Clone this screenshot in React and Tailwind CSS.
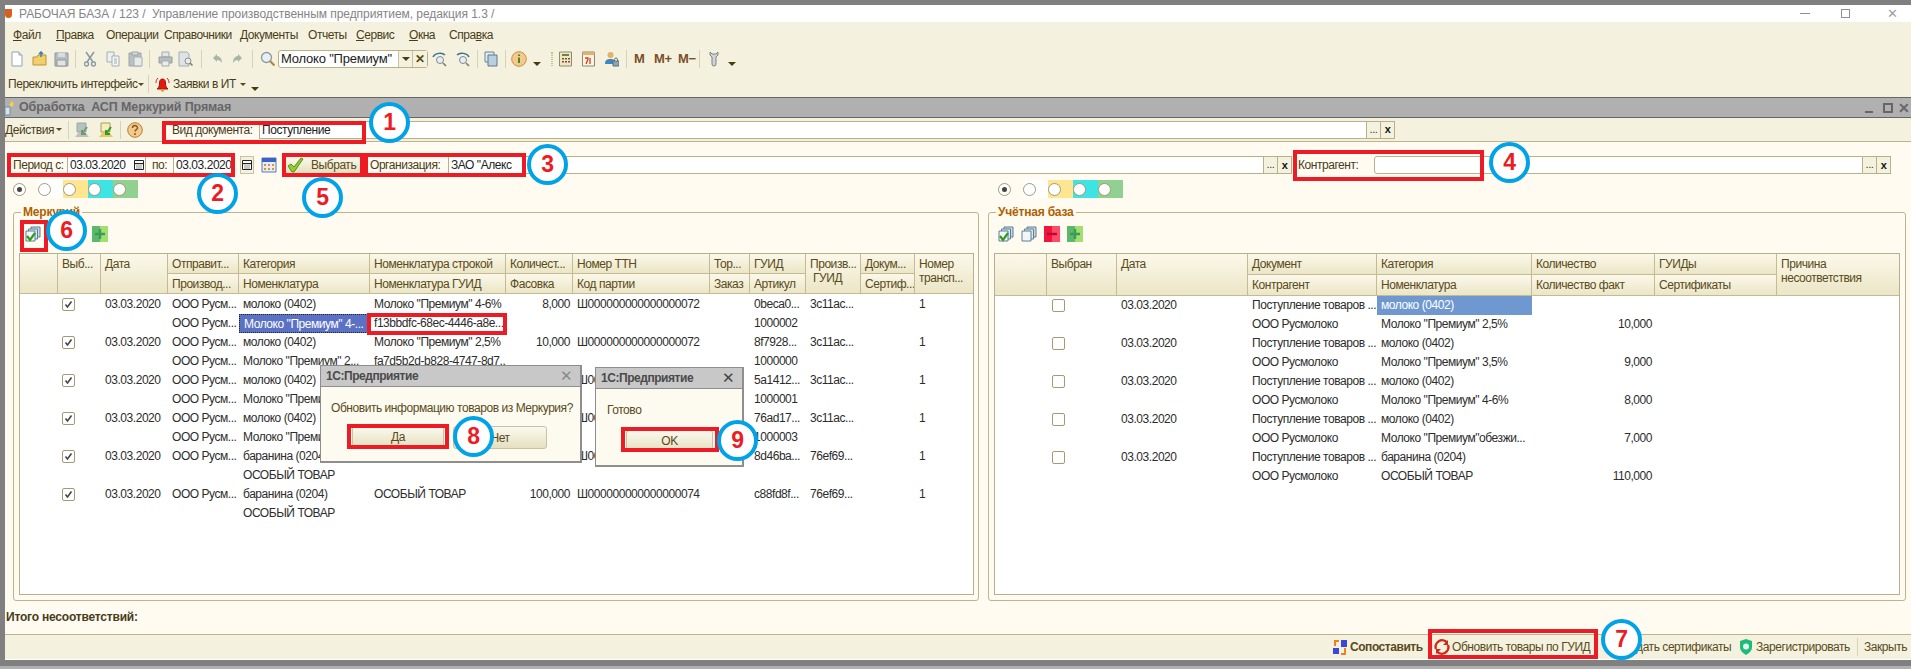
import React from 'react'

const Sep = ({ className = '' }) => <div className={`h-[18px] w-px shrink-0 bg-[#d8d3b4] ${className}`} />
const Drop = ({ className = '' }) => (
  <div className={`h-0 w-0 shrink-0 border-x-[4px] border-t-[4px] border-x-transparent border-t-[#4a3a10] ${className}`} />
)
const Small = ({ className = '' }) => (
  <div className={`h-0 w-0 shrink-0 border-x-[3px] border-t-[3px] border-x-transparent border-t-[#5a4a20] ${className}`} />
)

const Ico = ({ w = 16, className = '', children }) => (
  <svg width={w} height="16" viewBox={`0 0 ${w} 16`} className={`shrink-0 ${className}`}>
    {children}
  </svg>
)

const DocI = (p) => (
  <Ico w={12} {...p}>
    <path d="M1 1h7l3 3v11H1z" fill="#fff" stroke="#8fa3b8" />
    <path d="M8 1v3h3" fill="#dfe8f0" stroke="#8fa3b8" />
  </Ico>
)
const FolderI = (p) => (
  <Ico w={15} {...p}>
    <path d="M1 6h4l1-2h8v10H1z" fill="#f2cf6b" stroke="#b8963a" />
    <path d="M9 6V1M7 3l2-2 2 2" fill="none" stroke="#3d7fb0" strokeWidth="1.5" />
  </Ico>
)
const SaveI = (p) => (
  <Ico w={15} {...p}>
    <path d="M1 2h13v13H1z" fill="#b5bcc0" stroke="#8f979b" />
    <path d="M4 2h7v4H4z" fill="#d7dcdd" />
    <path d="M3 9h9v6H3z" fill="#e2e4e2" stroke="#8f979b" />
  </Ico>
)
const CutI = (p) => (
  <Ico w={12} {...p}>
    <path d="M2 1l7 10M10 1L3 11" stroke="#8a9aa8" strokeWidth="1.6" fill="none" />
    <circle cx="2.5" cy="13" r="2" fill="none" stroke="#8a9aa8" strokeWidth="1.4" />
    <circle cx="9.5" cy="13" r="2" fill="none" stroke="#8a9aa8" strokeWidth="1.4" />
  </Ico>
)
const CopyI = (p) => (
  <Ico w={14} {...p}>
    <path d="M1 1h7v10H1z" fill="#eef0ee" stroke="#a3aeb5" />
    <path d="M6 5h7v10H6z" fill="#f4f5f2" stroke="#a3aeb5" />
    <path d="M8 8h3M8 10h3M8 12h3" stroke="#a3aeb5" />
  </Ico>
)
const PasteI = (p) => (
  <Ico w={15} {...p}>
    <path d="M1 2h12v13H1z" fill="#b9c1c5" stroke="#9aa4aa" />
    <path d="M4 1h6v3H4z" fill="#dadcd8" stroke="#9aa4aa" />
    <path d="M6 6h8v9H6z" fill="#e8eae6" stroke="#a3aeb5" />
  </Ico>
)
const PrintI = (p) => (
  <Ico w={15} {...p}>
    <path d="M4 1h7v5H4z" fill="#e4e6e3" stroke="#a3aaad" />
    <path d="M1 6h13v6H1z" fill="#b7bdc0" stroke="#969ea2" />
    <path d="M4 10h7v5H4z" fill="#eceee9" stroke="#a3aaad" />
  </Ico>
)
const PreviewI = (p) => (
  <Ico w={15} {...p}>
    <path d="M1 1h8l2 2v12H1z" fill="#dfe3e4" stroke="#a3aeb5" />
    <circle cx="10" cy="10" r="3" fill="#e8eef0" stroke="#8a8f90" />
    <path d="M12 12l2.5 2.5" stroke="#8a7a50" strokeWidth="1.5" />
  </Ico>
)
const BackI = ({ flip, ...p }) => (
  <Ico w={11} {...p}>
    <path
      d={flip ? 'M6 3l4 4-4 4V9C4 9 2 10 1 12 1 8 3 5 6 5z' : 'M5 3L1 7l4 4V9c2 0 4 1 5 3 0-4-2-7-5-7z'}
      fill="#a8b6a8"
    />
  </Ico>
)
const SearchI = (p) => (
  <Ico w={15} {...p}>
    <circle cx="6.5" cy="6.5" r="5" fill="#e6eff5" stroke="#8f9aa0" strokeWidth="1.3" />
    <path d="M10 10l4.5 4.5" stroke="#b08a3c" strokeWidth="2.2" />
  </Ico>
)
const HistI = ({ flip, ...p }) => (
  <Ico w={15} {...p}>
    <path
      d={flip ? 'M14 6C12 2 5 1 2 4' : 'M1 6C3 2 10 1 13 4'}
      fill="none"
      stroke="#3d6f9a"
      strokeWidth="1.5"
    />
    <circle cx="8" cy="9" r="3.5" fill="#e6eff5" stroke="#7e8a90" />
    <path d="M11 12l3 3" stroke="#8a7a50" strokeWidth="1.6" />
  </Ico>
)
const WinI = (p) => (
  <Ico w={14} {...p}>
    <path d="M1 1h9v10H1z" fill="#dfe9f0" stroke="#6f8696" />
    <path d="M4 4h9v11H4z" fill="#b9d0e0" stroke="#5f7686" />
  </Ico>
)
const InfoI = (p) => (
  <Ico w={16} {...p}>
    <circle cx="8" cy="8" r="7.3" fill="#f4c98c" stroke="#c98d4a" />
    <path d="M8 6.5v5.5M8 3.5v1.5" stroke="#4d8a20" strokeWidth="2" />
  </Ico>
)
const CalcI = (p) => (
  <Ico w={13} {...p}>
    <path d="M.5 1h12v14H.5z" fill="#f4e4c2" stroke="#8e8a70" />
    <path d="M3 3h7v2H3z" fill="#5b8a4a" />
    <path d="M3 7h2v1.5H3zM6 7h2v1.5H6zM9 7h2v1.5H9zM3 10h2v1.5H3zM6 10h2v1.5H6zM9 10h2v1.5H9z" fill="#6a5a3a" />
  </Ico>
)
const DateI = (p) => (
  <Ico w={13} {...p}>
    <path d="M.5 1h12v14H.5z" fill="#fbf5e2" stroke="#8e8a70" />
    <path d="M.5 1h12v3H.5z" fill="#e0b070" />
    <path d="M3 7h3v1L4 13M8 7v6" fill="none" stroke="#d83a20" strokeWidth="1.3" />
  </Ico>
)
const UserI = (p) => (
  <Ico w={14} {...p}>
    <circle cx="5.5" cy="4" r="3" fill="#e8b060" />
    <path d="M0 13c0-4 2-5 5.5-5S10 9 10 13z" fill="#3e86c0" />
    <path d="M8 10h6v5H8z" fill="#8fa4ae" stroke="#5f7078" />
    <path d="M9.5 10V8.5a1.5 1.5 0 013 0V10" fill="none" stroke="#5f7078" />
  </Ico>
)
const WrenchI = (p) => (
  <Ico w={10} {...p}>
    <path
      d="M1 1v3l2 2v7a2 2 0 004 0V6l2-2V1L7 3H3z"
      fill="#d0d4d4"
      stroke="#7c8488"
    />
  </Ico>
)
const BellI = (p) => (
  <Ico w={15} {...p}>
    <path d="M7.5 3C5 3 4.5 5 4.5 8S3 12 2 13h11c-1-1-2.5-2-2.5-5S10 3 7.5 3z" fill="#e21a12" stroke="#a81008" />
    <circle cx="7.5" cy="14.3" r="1.5" fill="#d8a020" />
    <path d="M3 2C1.5 3.5 1 5 1 7M12 2c1.5 1.5 2 3 2 5" fill="none" stroke="#e21a12" />
  </Ico>
)
const StarI = (p) => (
  <Ico w={11} {...p}>
    <path d="M7 1l2 3-2 3-3-2z" fill="#f4d04a" />
    <path d="M0 7h5v8H0z" fill="#d5e3ec" stroke="#6f8fa4" />
  </Ico>
)
const DocArrI = ({ dim, ...p }) => (
  <Ico w={17} {...p}>
    <path d="M3 1h9v9H3z" fill={dim ? '#b5c0c0' : '#f5ecc0'} stroke={dim ? '#9aa8a8' : '#b09a50'} />
    <path d="M1 15l4-5h6l4 5z" fill={dim ? '#c0c0b4' : '#e8c860'} />
    <path d="M13 5l-5 7M8 8v4h4" fill="none" stroke={dim ? '#6f9a7a' : '#2f9a2f'} strokeWidth="2" />
  </Ico>
)
const HelpI = (p) => (
  <Ico w={16} {...p}>
    <circle cx="8" cy="8" r="7.3" fill="#f4c98c" stroke="#b08040" />
    <path d="M5.5 6a2.500 2.500 0 115 0c0 1.500-2.500 1.800-2.500 3.500M8 11v2" fill="none" stroke="#8a5a1a" strokeWidth="1.500" />
  </Ico>
)
const StackI = ({ check, ...p }) => (
  <Ico w={16} {...p}>
    <path d="M6 1h9v10H6z" fill="#c8dae6" stroke="#5f7f94" />
    <path d="M3.5 3h9v10h-9z" fill="#dce8f0" stroke="#5f7f94" />
    <path d="M1 5h9v10H1z" fill="#f2f6f8" stroke="#5f7f94" />
    {check && <path d="M2 10l3 4 5-7" fill="none" stroke="#2f9a20" strokeWidth="2.2" />}
  </Ico>
)
const PlusI = (p) => (
  <Ico w={16} {...p}>
    <path d="M0 0h8v16H0z" fill="#5cb86a" />
    <path d="M8 0h8v16H8z" fill="#a0e070" />
    <path d="M8 3v10M3 8h10" stroke="#3f9a58" strokeWidth="2.4" />
  </Ico>
)
const MinusI = (p) => (
  <Ico w={16} {...p}>
    <path d="M0 0h8v16H0z" fill="#f0143c" />
    <path d="M8 0h8v16H8z" fill="#ff4a6a" />
    <path d="M3 8h10" stroke="#b80a30" strokeWidth="2.4" />
  </Ico>
)
const CalendBlue = (p) => (
  <Ico w={16} {...p}>
    <path d="M1 1h14v14H1z" fill="#e4eef8" stroke="#5a78b0" />
    <path d="M1 1h14v4H1z" fill="#3a62c8" />
    <path d="M3 7h2v2H3zM7 7h2v2H7zM11 7h2v2h-2zM3 11h2v2H3zM7 11h2v2H7zM11 11h2v2h-2z" fill="#e09030" />
  </Ico>
)
const GridMini = () => (
  <svg width="10" height="10" viewBox="0 0 10 10" className="shrink-0">
    <path d="M.5.5h9v9h-9z" fill="#fff" stroke="#222" />
    <path d="M1 3h8v1.2H1z" fill="#222" />
    <path d="M2.5 5.500h1v1h-1zM4.500 5.500h1v1h-1zM6.500 5.500h1v1h-1zM2.500 7.500h1v1h-1zM4.500 7.500h1v1h-1zM6.500 7.500h1v1h-1z" fill="#222" />
  </svg>
)
const TickI = (p) => (
  <Ico w={17} {...p}>
    <path d="M1 9l3-2 3 3 7-9 2 1-9 13H5z" fill="#8ccf30" stroke="#5a8a18" />
  </Ico>
)
const MatchI = (p) => (
  <Ico w={16} {...p}>
    <path d="M9 1h6v7H9zM1 9h6v6H1z" fill="#3848d8" />
    <path d="M3 7V2h4M13 9v6H9" fill="none" stroke="#f08020" strokeWidth="2" />
  </Ico>
)
const RefreshI = (p) => (
  <Ico w={16} {...p}>
    <path d="M2 10A6.500 6.500 0 0113 3.500M14 6A6.500 6.500 0 013 12.500" fill="none" stroke="#cc2a1a" strokeWidth="2.4" />
    <path d="M14 1v5H9M2 15v-5h5" fill="#cc2a1a" />
  </Ico>
)
const ShieldI = (p) => (
  <Ico w={14} {...p}>
    <path d="M7 0l6 2v6c0 4-3 6-6 8-3-2-6-4-6-8V2z" fill="#1ebc78" />
    <circle cx="7" cy="7.5" r="3" fill="#e6f4f0" />
  </Ico>
)

const Field = ({ className = '', value, rounded }) => (
  <div
    className={`flex h-[18px] items-center border border-[#b9b08a] bg-white pl-[2px] text-[#222] ${rounded ? 'rounded-l-[3px]' : ''} ${className}`}
  >
    {value}
  </div>
)
const FieldBtns = () => (
  <>
    <div className="flex h-[18px] w-[14px] items-start justify-center border-y border-r border-[#b9b08a] bg-[#f4f2de] text-[11px] leading-[14px] text-[#333]">
      ...
    </div>
    <div className="flex h-[18px] w-[14px] items-center justify-center border-y border-r border-[#b9b08a] bg-[#f4f2de] text-[11px] font-bold text-[#111]">
      x
    </div>
  </>
)

const Radio = ({ on, className = '' }) => (
  <div className={`flex h-[13px] w-[13px] shrink-0 items-center justify-center rounded-full border border-[#a39a78] bg-white ${className}`}>
    {on && <div className="h-[5px] w-[5px] rounded-full bg-[#444]" />}
  </div>
)
const RadioBar = () => (
  <div className="flex h-[18px] items-center">
    <Radio on />
    <div className="ml-[12px] flex h-[18px] w-[25px] items-center bg-white"><Radio /></div>
    <div className="flex h-[18px] w-[25px] items-center bg-[#fde68f]"><Radio /></div>
    <div className="flex h-[18px] w-[25px] items-center bg-[#3ce4e4]"><Radio /></div>
    <div className="flex h-[18px] w-[25px] items-center bg-[#90d090]"><Radio /></div>
  </div>
)

const Head = ({ children, className = '' }) => (
  <div
    className={`overflow-hidden border-r border-b border-[#c4bb94] bg-gradient-to-b from-[#fbf8ea] to-[#ebe6c6] pl-[4px] pt-[3px] leading-[14px] text-[#5a4a20] ${className}`}
  >
    {children}
  </div>
)

const Check = ({ on }) => (
  <div className="flex h-[13px] w-[13px] items-center justify-center rounded-[2px] border border-[#a39a78] bg-white">
    {on && (
      <svg width="9" height="9" viewBox="0 0 9 9">
        <path d="M1.5 4.5l2 2.500 4-5.500" fill="none" stroke="#444" strokeWidth="1.6" />
      </svg>
    )}
  </div>
)

const Cell = ({ children, className = '' }) => (
  <div className={`h-[19px] overflow-hidden pl-[4px] leading-[19px] text-[#2c2c2c] ${className}`}>
    {children}
  </div>
)

const leftRows = [
  ['молоко (0402)', 'Молоко "Премиум" 4-6%', '8,000', 'Ш000000000000000072', '0beca0...', '3c11ac...', 'Молоко "Премиум" 4-...', 'f13bbdfc-68ec-4446-a8e...', '1000002'],
  ['молоко (0402)', 'Молоко "Премиум" 2,5%', '10,000', 'Ш000000000000000072', '8f7928...', '3c11ac...', 'Молоко "Премиум" 2...', 'fa7d5b2d-b828-4747-8d7...', '1000000'],
  ['молоко (0402)', 'Молоко "Премиум" 3,5%', '9,000', 'Ш000000000000000072', '5a1412...', '3c11ac...', 'Молоко "Премиум" 3...', '', '1000001'],
  ['молоко (0402)', 'Молоко "Премиум"обезжи...', '7,000', 'Ш000000000000000072', '76ad17...', '3c11ac...', 'Молоко "Премиум"об...', '', '1000003'],
  ['баранина (0204)', 'ОСОБЫЙ ТОВАР', '110,000', 'Ш000000000000000073', '8d46ba...', '76ef69...', 'ОСОБЫЙ ТОВАР', '', ''],
  ['баранина (0204)', 'ОСОБЫЙ ТОВАР', '100,000', 'Ш000000000000000074', 'c88fd8f...', '76ef69...', 'ОСОБЫЙ ТОВАР', '', ''],
]

const rightRows = [
  ['молоко (0402)', 'Молоко "Премиум" 2,5%', '10,000'],
  ['молоко (0402)', 'Молоко "Премиум" 3,5%', '9,000'],
  ['молоко (0402)', 'Молоко "Премиум" 4-6%', '8,000'],
  ['молоко (0402)', 'Молоко "Премиум"обезжи...', '7,000'],
  ['баранина (0204)', 'ОСОБЫЙ ТОВАР', '110,000'],
]

function LeftTable() {
  return (
    <div className="ml-[5px] mt-[11px] h-[342px] w-[955px] overflow-hidden border border-[#b9b08a] bg-white">
      <div className="grid h-[40px] grid-cols-[38px_43px_67px_71px_131px_136px_67px_137px_40px_56px_55px_54px_59px] grid-rows-[20px_20px]">
        <Head className="row-span-2" />
        <Head className="row-span-2">Выб...</Head>
        <Head className="row-span-2">Дата</Head>
        <Head>Отправит...</Head>
        <Head>Категория</Head>
        <Head>Номенклатура строкой</Head>
        <Head>Количест...</Head>
        <Head>Номер ТТН</Head>
        <Head>Тор...</Head>
        <Head>ГУИД</Head>
        <Head className="row-span-2">
          Произв...<br /><span className="pl-[3px]">ГУИД</span>
        </Head>
        <Head>Докум...</Head>
        <Head className="row-span-2">Номер<br />трансп...</Head>
        <Head>Производ...</Head>
        <Head>Номенклатура</Head>
        <Head>Номенклатура ГУИД</Head>
        <Head>Фасовка</Head>
        <Head>Код партии</Head>
        <Head>Заказ</Head>
        <Head>Артикул</Head>
        <Head>Сертиф...</Head>
      </div>
      <div className="grid grid-cols-[38px_43px_67px_71px_131px_136px_67px_137px_40px_56px_55px_54px_59px] pt-[1px]">
        {leftRows.map((r, i) => (
          <React.Fragment key={i}>
            <Cell />
            <Cell className="flex items-center"><Check on /></Cell>
            <Cell>03.03.2020</Cell>
            <Cell>ООО Русм...</Cell>
            <Cell>{r[0]}</Cell>
            <Cell>{r[1]}</Cell>
            <Cell className="pr-[3px] text-right">{r[2]}</Cell>
            <Cell>{r[3]}</Cell>
            <Cell />
            <Cell>{r[4]}</Cell>
            <Cell>{r[5]}</Cell>
            <Cell />
            <Cell>1</Cell>

            <Cell />
            <Cell />
            <Cell />
            <Cell>{i < 4 ? 'ООО Русм...' : ''}</Cell>
            <Cell
              className={
                i === 0
                  ? 'border border-dotted border-[#223] bg-[#5b72c4] leading-[17px] text-white'
                  : ''
              }
            >
              {r[6]}
            </Cell>
            <Cell>{r[7]}</Cell>
            <Cell />
            <Cell />
            <Cell />
            <Cell>{r[8]}</Cell>
            <Cell />
            <Cell />
            <Cell />
          </React.Fragment>
        ))}
      </div>
    </div>
  )
}

function RightTable() {
  return (
    <div className="ml-[5px] mt-[11px] h-[342px] w-[906px] overflow-hidden border border-[#b9b08a] bg-white">
      <div className="grid h-[42px] grid-cols-[52px_70px_131px_129px_155px_123px_122px_124px] grid-rows-[21px_21px]">
        <Head className="row-span-2" />
        <Head className="row-span-2">Выбран</Head>
        <Head className="row-span-2">Дата</Head>
        <Head>Документ</Head>
        <Head>Категория</Head>
        <Head>Количество</Head>
        <Head>ГУИДы</Head>
        <Head className="row-span-2">Причина<br />несоответствия</Head>
        <Head>Контрагент</Head>
        <Head>Номенклатура</Head>
        <Head>Количество факт</Head>
        <Head>Сертификаты</Head>
      </div>
      <div className="grid grid-cols-[52px_70px_131px_129px_155px_123px_122px_124px]">
        {rightRows.map((r, i) => (
          <React.Fragment key={i}>
            <Cell />
            <Cell className="flex items-center pl-[5px]"><Check /></Cell>
            <Cell>03.03.2020</Cell>
            <Cell>Поступление товаров ...</Cell>
            <Cell className={i === 0 ? 'bg-[#7098d0] text-white' : ''}>{r[0]}</Cell>
            <Cell />
            <Cell />
            <Cell />

            <Cell />
            <Cell />
            <Cell />
            <Cell>ООО Русмолоко</Cell>
            <Cell>{r[1]}</Cell>
            <Cell className="pr-[3px] text-right">{r[2]}</Cell>
            <Cell />
            <Cell />
          </React.Fragment>
        ))}
      </div>
    </div>
  )
}

const Btn = ({ children, className = '' }) => (
  <div
    className={`flex items-center justify-center rounded-[3px] border border-[#c9c2a0] bg-gradient-to-b from-[#fbf9ee] to-[#e5e0c0] text-[#5a4a20] ${className}`}
  >
    {children}
  </div>
)

const Box = ({ className }) => (
  <div className={`pointer-events-none absolute border-4 border-[#ed1c24] ${className}`} />
)
const Mark = ({ n, className }) => (
  <div
    className={`absolute flex h-[41px] w-[41px] items-center justify-center rounded-full border-[4px] border-[#00a2e8] bg-white text-[23px] font-bold text-[#ed1c24] ${className}`}
  >
    {n}
  </div>
)

function Dialog({ className, title, closeDark, children }) {
  return (
    <div className={`absolute flex flex-col border border-[#8e8e8e] border-r-2 border-b-2 bg-[#fdfbef] ${className}`}>
      <div className="flex h-[20px] items-center justify-between bg-[#c8c8c8] px-[5px] font-bold text-[#4a4a4a]">
        <span>{title}</span>
        <span className={`pr-[2px] text-[15px] font-normal ${closeDark ? 'text-[#444]' : 'text-[#8a8a8a]'}`}>✕</span>
      </div>
      <div className="h-px bg-[#8e8e8e]" />
      {children}
    </div>
  )
}

export default function App() {
  return (
    <div className="relative flex h-[669px] w-[1911px] flex-col overflow-hidden whitespace-nowrap bg-[#808080] font-['Liberation_Sans',Arial,sans-serif] text-[12px] tracking-[-0.45px]">
      <div className="ml-[5px] mt-[5px] flex flex-1 flex-col">
        {/* title */}
        <div className="flex h-[17px] items-center bg-white text-[12px] tracking-[-0.05px] text-[#858585]">
          <div className="h-[9px] w-[7px] rounded-b-full bg-[#d9601a]" />
          <span className="ml-[7px] whitespace-pre">РАБОЧАЯ БАЗА / 123 /  Управление производственным предприятием, редакция 1.3 /</span>
          <div className="ml-auto flex items-center text-[#a0a0a0]">
            <div className="h-px w-[10px] bg-[#909090]" />
            <div className="ml-[31px] h-[9px] w-[9px] border border-[#909090]" />
            <span className="ml-[37px] mr-[13px] text-[13px] leading-none">✕</span>
          </div>
        </div>
        {/* main toolbars */}
        <div className="flex h-[75px] flex-col bg-[#f4f2de] text-[#4a3c1a]">
          <div className="flex h-[24px] items-center pt-[1px] text-[12px]">
            <span className="ml-[8px] w-[43px]"><u>Ф</u>айл</span>
            <span className="w-[50px]"><u>П</u>равка</span>
            <span className="w-[58px]">Операции</span>
            <span className="w-[76px]">Справочники</span>
            <span className="w-[68px]">Документы</span>
            <span className="w-[48px]">Отчеты</span>
            <span className="w-[53px]"><u>С</u>ервис</span>
            <span className="w-[40px]"><u>О</u>кна</span>
            <span>Спра<u>в</u>ка</span>
          </div>
          <div className="flex h-[26px] items-center">
            <DocI className="ml-[6px]" />
            <FolderI className="ml-[9px]" />
            <SaveI className="ml-[7px]" />
            <Sep className="ml-[6px]" />
            <CutI className="ml-[8px]" />
            <CopyI className="ml-[10px]" />
            <PasteI className="ml-[8px]" />
            <Sep className="ml-[6px]" />
            <PrintI className="ml-[8px]" />
            <PreviewI className="ml-[5px]" />
            <Sep className="ml-[8px]" />
            <BackI className="ml-[10px]" />
            <BackI flip className="ml-[9px]" />
            <Sep className="ml-[9px]" />
            <SearchI className="ml-[7px]" />
            <div className="ml-[3px] flex h-[18px] w-[150px] items-center rounded-[3px] border border-[#b9b08a] bg-white text-[13px] tracking-[-0.2px] text-[#222]">
              <span className="w-[119px] pl-[2px]">Молоко "Премиум"</span>
              <div className="flex h-full w-[15px] items-center justify-center border-x border-[#c9c2a0] bg-[#f4f2de]"><Drop /></div>
              <div className="flex h-full w-[14px] items-center justify-center bg-[#f4f2de] text-[12px] font-bold text-[#5a4a10]">✕</div>
            </div>
            <HistI className="ml-[4px]" />
            <HistI flip className="ml-[8px]" />
            <Sep className="ml-[7px]" />
            <WinI className="ml-[6px]" />
            <Sep className="ml-[7px]" />
            <InfoI className="ml-[5px]" />
            <Drop className="ml-[6px] mt-[9px]" />
            <div className="ml-[10px] h-[14px] w-[2px] border-x border-dotted border-[#c8c090]" />
            <CalcI className="ml-[6px]" />
            <DateI className="ml-[10px]" />
            <UserI className="ml-[10px]" />
            <Sep className="ml-[7px]" />
            <span className="ml-[7px] w-[11px] text-[13px] font-bold text-[#7a4e28]">M</span>
            <span className="ml-[9px] w-[16px] text-[13px] font-bold text-[#7a4e28]">M+</span>
            <span className="ml-[8px] w-[16px] text-[13px] font-bold text-[#7a4e28]">M−</span>
            <Sep className="ml-[5px]" />
            <WrenchI className="ml-[9px]" />
            <Drop className="ml-[9px] mt-[9px]" />
          </div>
          <div className="flex h-[22px] items-center pt-[2px]">
            <span className="ml-[3px] w-[125px]">Переключить интерфейс</span>
            <Small className="ml-[5px]" />
            <Sep className="ml-[4px]" />
            <BellI className="ml-[6px]" />
            <span className="ml-[3px] w-[63px]">Заявки в ИТ</span>
            <Small className="ml-[4px]" />
            <Drop className="ml-[5px] mt-[9px]" />
          </div>
        </div>
        <div className="h-px bg-[#666]" />
        {/* form title */}
        <div className="flex h-[19px] items-center whitespace-pre bg-[#b0b0b0] text-[12.5px] font-bold tracking-[-0.1px] text-[#666]">
          <StarI />
          <span className="ml-[3px]">Обработка  АСП Меркурий Прямая</span>
          <div className="ml-auto flex items-center text-[#666]">
            <div className="mt-[8px] h-[2px] w-[8px] bg-[#666]" />
            <div className="ml-[10px] h-[10px] w-[10px] border-2 border-[#666]" />
            <span className="ml-[5px] mr-[1px] text-[14px] leading-none">✕</span>
          </div>
        </div>
        <div className="h-px bg-[#666]" />
        {/* form toolbar */}
        <div className="flex h-[24px] items-center border-b border-[#bdb48e] bg-[#f4f2de] text-[#4a3c1a]">
          <span className="w-[47px]">Действия</span>
          <Small className="ml-[4px]" />
          <Sep className="ml-[6px]" />
          <DocArrI dim className="ml-[5px]" />
          <DocArrI className="ml-[7px]" />
          <Sep className="ml-[5px]" />
          <HelpI className="ml-[6px]" />
          <div className="ml-[22px] flex h-[18px] w-[94px] items-center bg-[#fffbf0] pl-[7px]">Вид документа:</div>
          <Field className="w-[1108px]" value="Поступление" />
          <FieldBtns />
        </div>
        {/* filters + tables */}
        <div className="flex flex-1 flex-col bg-[#fffbf0]">
          <div className="mt-[14px] flex h-[18px] items-center text-[#4a3c1a]">
            <span className="ml-[8px] w-[54px]">Период с:</span>
            <Field className="w-[79px] justify-between pr-[1px]" value={<>03.03.2020 <GridMini /></>} />
            <span className="ml-[6px] w-[21px]">по:</span>
            <Field className="w-[62px]" value="03.03.2020" />
            <div className="ml-[5px] flex h-[18px] w-[14px] items-center justify-center border border-[#c9c2a0] bg-[#f4f2de]"><GridMini /></div>
            <CalendBlue className="ml-[7px]" />
            <Btn className="ml-[7px] h-[18px] w-[78px] justify-start">
              <TickI className="ml-[2px]" />
              <span className="ml-[7px]">Выбрать</span>
            </Btn>
            <span className="ml-[8px] w-[78px]">Организация:</span>
            <Field className="w-[816px]" value={'ЗАО "Алекс'} />
            <FieldBtns />
            <span className="ml-[6px] w-[76px]">Контрагент:</span>
            <Field className="w-[489px]" value="" rounded />
            <FieldBtns />
          </div>
          <div className="mt-[6px] flex h-[18px] items-center">
            <div className="ml-[8px] w-[985px]"><RadioBar /></div>
            <RadioBar />
          </div>
          <div className="relative mt-[14px] flex gap-[9px] pl-[8px]">
            <div className="relative h-[389px] w-[966px] rounded-[3px] border border-[#bdb48e] pt-[13px]">
              <span className="absolute left-[7px] top-[-8px] bg-[#fffbf0] px-[2px] text-[12px] font-bold leading-[14px] tracking-[-0.2px] text-[#b06000]">Меркурий</span>
              <div className="ml-[10px] flex h-[16px] items-center">
                <StackI check className="ml-[1px]" />
                <PlusI className="ml-[51px]" />
              </div>
              <LeftTable />
            </div>
            <div className="relative h-[389px] w-[918px] rounded-[3px] border border-[#bdb48e] pt-[13px]">
              <span className="absolute left-[7px] top-[-8px] bg-[#fffbf0] px-[2px] text-[12px] font-bold leading-[14px] tracking-[-0.2px] text-[#b06000]">Учётная база</span>
              <div className="ml-[9px] flex h-[16px] items-center gap-[7px]">
                <StackI check />
                <StackI />
                <MinusI />
                <PlusI />
              </div>
              <RightTable />
            </div>
          </div>
          <div className="flex h-[32px] items-center pl-[1px] font-bold tracking-[-0.2px] text-[#4a3c1a]">Итого несоответствий:</div>
        </div>
        {/* footer */}
        <div className="flex h-[25px] items-center justify-end border-t border-[#bdb48e] bg-[#f4f2de] pr-[4px] text-[#5a4a20]">
          <MatchI />
          <span className="ml-[2px] w-[74px] font-bold">Сопоставить</span>
          <RefreshI className="ml-[10px]" />
          <span className="ml-[2px] w-[138px]">Обновить товары по ГУИД</span>
          <span className="ml-[27px] w-[111px]">Создать сертификаты</span>
          <ShieldI className="ml-[11px]" />
          <span className="ml-[3px] w-[93px]">Зарегистрировать</span>
          <Sep className="ml-[8px]" />
          <span className="ml-[6px] w-[43px]">Закрыть</span>
        </div>
        <div className="h-px bg-white" />
        <div className="h-[6px]" />
      </div>
      <div className="h-[3px] bg-[#b0b0b0]" />

      {/* dialogs */}
      <Dialog className="left-[320px] top-[365px] h-[98px] w-[262px]" title="1С:Предприятие">
        <div className="ml-[10px] mt-[14px] leading-[14px] text-[#5a4a20]">Обновить информацию товаров из Меркурия?</div>
        <div className="ml-[31px] mt-[11px] flex gap-[9px]">
          <Btn className="h-[22px] w-[92px]">Да</Btn>
          <Btn className="h-[23px] w-[94px]">Нет</Btn>
        </div>
      </Dialog>
      <Dialog className="left-[595px] top-[367px] h-[100px] w-[149px]" title="1С:Предприятие" closeDark>
        <div className="ml-[11px] mt-[14px] leading-[14px] text-[#5a4a20]">Готово</div>
        <div className="ml-[30px] mt-[13px]">
          <Btn className="h-[22px] w-[87px]">OK</Btn>
        </div>
      </Dialog>

      {/* annotations */}
      <Box className="left-[162px] top-[121px] h-[23px] w-[204px]" />
      <Box className="left-[7px] top-[153px] h-[24px] w-[228px]" />
      <Box className="left-[282px] top-[153px] h-[24px] w-[82px]" />
      <Box className="left-[364px] top-[153px] h-[24px] w-[162px]" />
      <Box className="left-[1293px] top-[150px] h-[31px] w-[191px]" />
      <Box className="left-[20px] top-[220px] h-[32px] w-[28px]" />
      <Box className="left-[367px] top-[313px] h-[22px] w-[140px]" />
      <Box className="left-[347px] top-[424px] h-[25px] w-[102px]" />
      <Box className="left-[621px] top-[427px] h-[25px] w-[98px]" />
      <Box className="left-[1428px] top-[629px] h-[30px] w-[170px]" />
      <Mark n="1" className="left-[369px] top-[102px]" />
      <Mark n="2" className="left-[197px] top-[173px]" />
      <Mark n="3" className="left-[527px] top-[144px]" />
      <Mark n="4" className="left-[1489px] top-[142px]" />
      <Mark n="5" className="left-[302px] top-[177px]" />
      <Mark n="6" className="left-[46px] top-[210px]" />
      <Mark n="7" className="left-[1601px] top-[619px]" />
      <Mark n="8" className="left-[453px] top-[416px]" />
      <Mark n="9" className="left-[717px] top-[420px]" />
    </div>
  )
}
